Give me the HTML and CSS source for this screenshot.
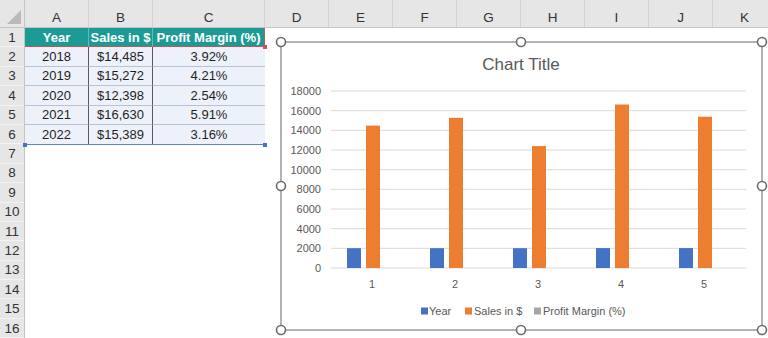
FILE: index.html
```html
<!DOCTYPE html>
<html lang="en">
<head>
  <meta charset="UTF-8">
  <title>Sales Chart</title>
  <link rel="stylesheet" href="styles.css">
</head>
<body>

<div class="sheet">
  <div class="col-heads">
    <div class="corner"></div>
    <div class="ch w64">A</div>
    <div class="ch w64">B</div>
    <div class="ch w112">C</div>
    <div class="ch w64">D</div>
    <div class="ch w64">E</div>
    <div class="ch w64">F</div>
    <div class="ch w64">G</div>
    <div class="ch w64">H</div>
    <div class="ch w64">I</div>
    <div class="ch w64">J</div>
    <div class="ch w64">K</div>
  </div>

  <div class="body">
    <div class="row-heads">
      <div class="rn">1</div>
      <div class="rn">2</div>
      <div class="rn">3</div>
      <div class="rn">4</div>
      <div class="rn">5</div>
      <div class="rn">6</div>
      <div class="rn">7</div>
      <div class="rn">8</div>
      <div class="rn">9</div>
      <div class="rn">10</div>
      <div class="rn">11</div>
      <div class="rn">12</div>
      <div class="rn">13</div>
      <div class="rn">14</div>
      <div class="rn">15</div>
      <div class="rn">16</div>
    </div>

    <div class="cells">
      <div class="data">
        <div class="hd">Year</div>
        <div class="hd">Sales in $</div>
        <div class="hd last">Profit Margin (%)</div>

        <div class="td">2018</div><div class="td">$14,485</div><div class="td last">3.92%</div>
        <div class="td">2019</div><div class="td">$15,272</div><div class="td last">4.21%</div>
        <div class="td">2020</div><div class="td">$12,398</div><div class="td last">2.54%</div>
        <div class="td">2021</div><div class="td">$16,630</div><div class="td last">5.91%</div>
        <div class="td bottom">2022</div><div class="td bottom">$15,389</div><div class="td bottom last">3.16%</div>

        <span class="knob red k1"></span>
        <span class="knob blue k2"></span>
        <span class="knob blue k3"></span>
      </div>

      <div class="chart">
        <svg width="481" height="288" viewBox="0 0 481 288">
          <rect class="frame" x="0" y="0" width="481" height="288"/>

          <text class="title" x="240" y="28">Chart Title</text>

          <g class="grid">
            <line x1="50" x2="465" y1="49" y2="49"/>
            <line x1="50" x2="465" y1="68.7" y2="68.7"/>
            <line x1="50" x2="465" y1="88.3" y2="88.3"/>
            <line x1="50" x2="465" y1="108" y2="108"/>
            <line x1="50" x2="465" y1="127.7" y2="127.7"/>
            <line x1="50" x2="465" y1="147.3" y2="147.3"/>
            <line x1="50" x2="465" y1="167" y2="167"/>
            <line x1="50" x2="465" y1="186.7" y2="186.7"/>
            <line x1="50" x2="465" y1="206.3" y2="206.3"/>
            <line x1="50" x2="465" y1="226" y2="226"/>
          </g>

          <g class="ylab">
            <text x="40" y="52.9">18000</text>
            <text x="40" y="72.6">16000</text>
            <text x="40" y="92.2">14000</text>
            <text x="40" y="111.9">12000</text>
            <text x="40" y="131.6">10000</text>
            <text x="40" y="151.2">8000</text>
            <text x="40" y="170.9">6000</text>
            <text x="40" y="190.6">4000</text>
            <text x="40" y="210.2">2000</text>
            <text x="40" y="229.9">0</text>
          </g>

          <g class="s-year">
            <rect x="66" y="206.2" width="14" height="19.8"/>
            <rect x="149" y="206.2" width="14" height="19.8"/>
            <rect x="232" y="206.2" width="14" height="19.8"/>
            <rect x="315" y="206.1" width="14" height="19.9"/>
            <rect x="398" y="206.1" width="14" height="19.9"/>
          </g>
          <g class="s-sales">
            <rect x="85" y="83.6" width="14" height="142.4"/>
            <rect x="168" y="75.8" width="14" height="150.2"/>
            <rect x="251" y="104.1" width="14" height="121.9"/>
            <rect x="334" y="62.5" width="14" height="163.5"/>
            <rect x="417" y="74.7" width="14" height="151.3"/>
          </g>

          <g class="xlab">
            <text x="91" y="246">1</text>
            <text x="174" y="246">2</text>
            <text x="257" y="246">3</text>
            <text x="340" y="246">4</text>
            <text x="423" y="246">5</text>
          </g>

          <g class="legend">
            <rect class="c-year" x="140" y="265.5" width="7" height="7"/>
            <text x="148" y="273">Year</text>
            <rect class="c-sales" x="184" y="265.5" width="7" height="7"/>
            <text x="193" y="273">Sales in $</text>
            <rect class="c-margin" x="253" y="265.5" width="7" height="7"/>
            <text x="262" y="273">Profit Margin (%)</text>
          </g>

          <g class="handles">
            <circle cx="0" cy="0" r="4.5"/>
            <circle cx="240" cy="0" r="4.5"/>
            <circle cx="481" cy="0" r="4.5"/>
            <circle cx="0" cy="144" r="4.5"/>
            <circle cx="481" cy="144" r="4.5"/>
            <circle cx="0" cy="288" r="4.5"/>
            <circle cx="240" cy="288" r="4.5"/>
            <circle cx="481" cy="288" r="4.5"/>
          </g>
        </svg>
      </div>
    </div>
  </div>
</div>

</body>
</html>
```

FILE: styles.css
```css
* {
  box-sizing: border-box;
}

body {
  margin: 0;
  font-family: 'Liberation Sans', Arial, sans-serif;
  background-color: #ffffff;
  color: #1f1f1f;
  width: 768px;
  height: 338px;
  overflow: hidden;
}

.sheet {
  display: flex;
  flex-direction: column;
}

/* column letters */
.col-heads {
  display: flex;
  height: 28px;
  background-color: #e6e6e6;
  border-bottom: 1px solid #c4c4c4;
}

.corner {
  width: 25px;
  flex-shrink: 0;
  position: relative;
  border-right: 1px solid #c4c4c4;
}

.corner::after {
  content: "";
  position: absolute;
  right: 3px;
  bottom: 3px;
  width: 14px;
  height: 14px;
  background-color: #b9b9b9;
  clip-path: polygon(100% 0, 100% 100%, 0 100%);
}

.ch {
  flex-shrink: 0;
  display: flex;
  align-items: center;
  justify-content: center;
  padding-top: 8px;
  font-size: 13.5px;
  color: #333;
  border-right: 1px solid #d2d2d2;
}

.w64 { width: 64px; }
.w112 { width: 112px; }

/* rows */
.body {
  display: flex;
}

.row-heads {
  width: 25px;
  flex-shrink: 0;
  display: flex;
  flex-direction: column;
  background-color: #e6e6e6;
  border-right: 1px solid #c4c4c4;
}

.rn {
  height: 19.4px;
  display: flex;
  align-items: center;
  justify-content: center;
  font-size: 13.5px;
  color: #333;
  border-bottom: 1px solid #f3f3f3;
}

.cells {
  flex: 1;
  position: relative;
}

/* data range A1:C6 */
.data {
  display: grid;
  grid-template-columns: 64px 64px 112px;
  grid-auto-rows: 19.4px;
  width: 240px;
  position: relative;
  border-right: 1px solid #5b86c5;
  border-bottom: 1px solid #5b86c5;
}

.hd {
  background-color: #1c9b95;
  color: #fff;
  font-weight: bold;
  font-size: 13px;
  display: flex;
  align-items: center;
  justify-content: center;
  border-right: 1px solid #5fbdb8;
  border-bottom: 1px solid #c9525b;
}

.hd.last {
  border-right: 1px solid #c9525b;
}

.td {
  background-color: #edf1fa;
  font-size: 13px;
  display: flex;
  align-items: center;
  justify-content: center;
  border-right: 1px solid #5a5a5a;
  border-bottom: 1px solid #b9c1d6;
}

.td.last {
  border-right: none;
}

.td.bottom {
  border-bottom: none;
}

.knob {
  position: absolute;
  width: 4px;
  height: 4px;
}

.knob.red { background-color: #c9525b; }
.knob.blue { background-color: #4472c4; }

.k1 { right: -3px; top: 17px; }
.k2 { left: -2px; bottom: -3px; }
.k3 { right: -3px; bottom: -3px; }

/* chart object */
.chart {
  position: absolute;
  left: 255.5px;
  top: 13.5px;
  width: 481px;
  height: 288px;
  background-color: #fff;
}

.chart svg {
  display: block;
  overflow: visible;
  font-family: 'Liberation Sans', Arial, sans-serif;
}

.frame {
  fill: #fff;
  stroke: #8a8a8a;
  stroke-width: 1.3;
}

.title {
  font-size: 17px;
  fill: #595959;
  text-anchor: middle;
}

.grid line {
  stroke: #d9d9d9;
  stroke-width: 1;
}

.ylab text {
  font-size: 11px;
  fill: #595959;
  text-anchor: end;
}

.xlab text {
  font-size: 11px;
  fill: #595959;
  text-anchor: middle;
}

.s-year rect, .c-year { fill: #4472c4; }
.s-sales rect, .c-sales { fill: #ed7d31; }
.c-margin { fill: #a5a5a5; }

.legend text {
  font-size: 11px;
  fill: #595959;
}

.handles circle {
  fill: #fff;
  stroke: #6b6b6b;
  stroke-width: 1.6;
}
```
